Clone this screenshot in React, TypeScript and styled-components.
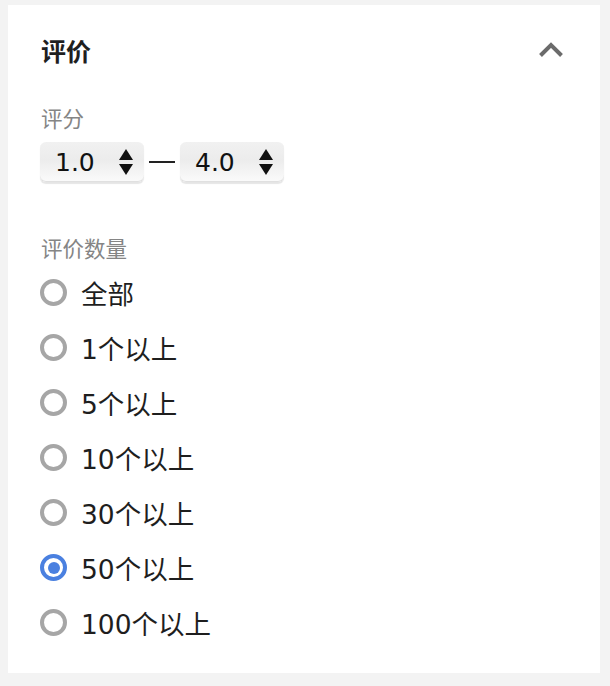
import styled, { createGlobalStyle } from "styled-components";

const GlobalStyle = createGlobalStyle`
  html, body {
    margin: 0;
    padding: 0;
    background: #f3f3f3;
    font-family: "DejaVu Sans", "Noto Sans CJK SC", sans-serif;
  }
`;

const Page = styled.div`
  padding: 5px 10px 14px 8px;
`;

const Card = styled.section`
  background: #fff;
  padding: 0 36px 23px 32px;
`;

const Header = styled.div`
  height: 89px;
  display: flex;
  align-items: center;
  justify-content: space-between;
`;

const Title = styled.h2`
  margin: 0;
  padding-left: 1px;
  font-size: 25px;
  font-weight: 700;
  color: #1f1f1f;
  font-family: "Noto Sans CJK SC", sans-serif;
`;

const Label = styled.div<{ $top: number }>`
  margin-top: ${(p) => p.$top}px;
  padding-left: 1px;
  height: 30px;
  line-height: 30px;
  font-size: 21.5px;
  color: #858585;
  font-family: "Noto Sans CJK SC", sans-serif;
`;

const RangeRow = styled.div`
  margin-top: 9px;
  display: flex;
  align-items: center;
`;

const Select = styled.div`
  box-sizing: border-box;
  width: 104px;
  height: 40px;
  border-radius: 6px;
  background: linear-gradient(180deg, #f1f1f1 0%, #ececec 45%, #fbfbfb 100%);
  box-shadow: 0 2px 1px rgba(0, 0, 0, 0.1), inset 0 -1px 0 #e0e0e0;
  display: flex;
  align-items: center;
  justify-content: space-between;
  padding: 0 11px 0 15px;
  font-size: 25px;
  color: #111;
  cursor: pointer;
`;

const Dash = styled.span`
  width: 26px;
  height: 2px;
  background: #222;
  margin: 0 5px;
`;

const RadioList = styled.div`
  margin-top: 2px;
  display: flex;
  flex-direction: column;
`;

const Option = styled.label`
  height: 55px;
  display: flex;
  align-items: center;
  gap: 14px;
  font-size: 26.5px;
  color: #1e1e1e;
  cursor: pointer;
`;

const Circle = styled.span<{ $checked?: boolean }>`
  box-sizing: border-box;
  width: 27px;
  height: 27px;
  border-radius: 50%;
  border: 4px solid ${(p) => (p.$checked ? "#4a80e0" : "#a6a6a6")};
  display: flex;
  align-items: center;
  justify-content: center;
  flex-shrink: 0;
  &::after {
    content: "";
    width: 12px;
    height: 12px;
    border-radius: 50%;
    background: ${(p) => (p.$checked ? "#4a80e0" : "transparent")};
  }
`;

const Chevron = () => (
  <svg width="26" height="16" viewBox="0 0 26 16">
    <path d="M2.5 13.5 L13 3 L23.5 13.5" fill="none" stroke="#6b6b6b" strokeWidth="4" />
  </svg>
);

const Arrows = () => (
  <svg width="14" height="26" viewBox="0 0 14 26">
    <path d="M7 0 L14 11 L0 11 Z" fill="#111" />
    <path d="M7 26 L14 15 L0 15 Z" fill="#111" />
  </svg>
);

const options = ["全部", "1个以上", "5个以上", "10个以上", "30个以上", "50个以上", "100个以上"];

export default function App() {
  const selected = "50个以上";
  return (
    <>
      <GlobalStyle />
      <Page>
        <Card>
          <Header>
            <Title>评价</Title>
            <Chevron />
          </Header>
          <Label $top={9}>评分</Label>
          <RangeRow>
            <Select>
              <span>1.0</span>
              <Arrows />
            </Select>
            <Dash />
            <Select>
              <span>4.0</span>
              <Arrows />
            </Select>
          </RangeRow>
          <Label $top={51}>评价数量</Label>
          <RadioList>
            {options.map((o) => (
              <Option key={o}>
                <Circle $checked={o === selected} />
                <span>{o}</span>
              </Option>
            ))}
          </RadioList>
        </Card>
      </Page>
    </>
  );
}
